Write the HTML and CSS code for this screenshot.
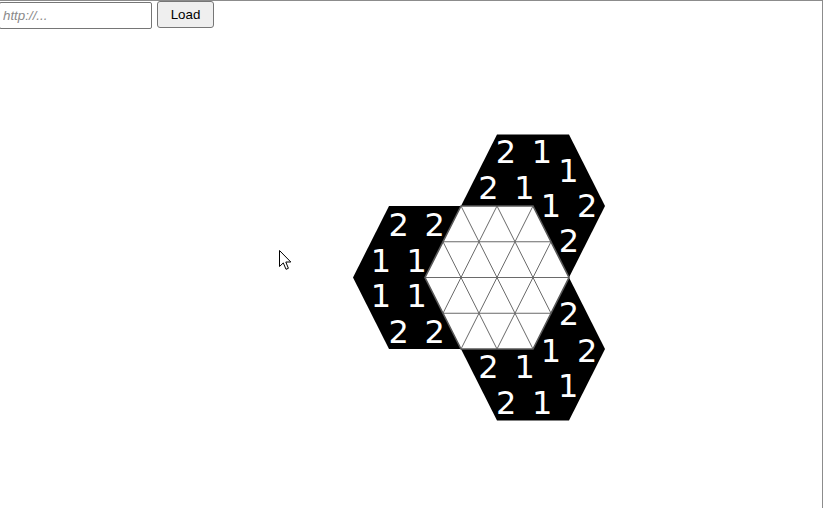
FILE: index.html
```html
<!DOCTYPE html>
<html>
<head>
<meta charset="utf-8">
<title>Puzzle</title>
<link rel="stylesheet" href="styles.css">
</head>
<body>
<div class="frame">
  <div class="bar">
    <input class="url" type="text" placeholder="http://...">
    <button class="load">Load</button>
  </div>
  <svg class="board" width="822" height="477" viewBox="0 30 822 477">
    <g class="blk">
      <polygon points="389,206 461,206 497,277.5 461,349 389,349 353,277.5"/>
      <polygon points="497,134.5 569,134.5 605,206 569,277.5 497,277.5 461,206"/>
      <polygon points="497,277.5 569,277.5 605,349 569,420.5 497,420.5 461,349"/>
    </g>
    <polygon class="grid-bg" points="461,206 533,206 569,277.5 533,349 461,349 425,277.5"/>
    <g class="grid">
      <line x1="443" y1="241.75" x2="551" y2="241.75"/>
      <line x1="425" y1="277.5" x2="569" y2="277.5"/>
      <line x1="443" y1="313.25" x2="551" y2="313.25"/>
      <line x1="443" y1="313.25" x2="497" y2="206"/>
      <line x1="461" y1="349" x2="533" y2="206"/>
      <line x1="497" y1="349" x2="551" y2="241.75"/>
      <line x1="443" y1="241.75" x2="497" y2="349"/>
      <line x1="461" y1="206" x2="533" y2="349"/>
      <line x1="497" y1="206" x2="551" y2="313.25"/>
    </g>
    <polygon class="grid-edge" points="461,206 533,206 569,277.5 533,349 461,349 425,277.5"/>
    <g class="num">
      <text x="506" y="163.4">2</text>
      <text x="542" y="163.4">1</text>
      <text x="568.5" y="181.7">1</text>
      <text x="488.5" y="199.2">2</text>
      <text x="524.5" y="199.2">1</text>
      <text x="551" y="216.7">1</text>
      <text x="587.2" y="216.7">2</text>
      <text x="569" y="251.7">2</text>

      <text x="398.8" y="235.5">2</text>
      <text x="434.8" y="235.5">2</text>
      <text x="381" y="271.7">1</text>
      <text x="416.7" y="271.7">1</text>
      <text x="381" y="306.7">1</text>
      <text x="416.7" y="306.7">1</text>
      <text x="398.8" y="342.7">2</text>
      <text x="434.8" y="342.7">2</text>

      <text x="569" y="325">2</text>
      <text x="551" y="361.5">1</text>
      <text x="587.2" y="361.5">2</text>
      <text x="488.5" y="378.4">2</text>
      <text x="524.7" y="378.4">1</text>
      <text x="568.3" y="396.5">1</text>
      <text x="506.2" y="413.7">2</text>
      <text x="542.3" y="413.7">1</text>
    </g>
  </svg>
</div>
<svg class="cursor" width="14" height="22" viewBox="0 0 14 22">
  <path d="M0.5,0.5 L0.5,16.5 L4.3,12.9 L7,19.3 L9.4,18.3 L6.8,12 L11.8,12 Z" fill="#fff" stroke="#000" stroke-width="1" stroke-linejoin="miter"/>
</svg>
</body>
</html>
```

FILE: styles.css
```css
html, body {
  margin: 0;
  padding: 0;
  background: #fff;
  overflow: hidden;
}

.frame {
  width: 822px;
  height: 507px;
  border-top: 1px solid #8c8c8c;
  border-right: 1px solid #8c8c8c;
  background: #fff;
}

.bar {
  display: flex;
  align-items: flex-start;
  gap: 5px;
  height: 29px;
}

.url {
  box-sizing: border-box;
  width: 153px;
  height: 27px;
  margin: 1px 0 0 -1px;
  padding: 0 3px;
  border: 1px solid #767676;
  border-radius: 2px;
  font-family: "Liberation Sans", Arial, sans-serif;
  font-size: 13.33px;
  color: #000;
  background: #fff;
  outline: none;
}

.url::placeholder {
  color: #8a8a8a;
  font-style: italic;
}

.load {
  box-sizing: border-box;
  width: 57px;
  height: 27px;
  margin: 0;
  padding: 0;
  border: 1px solid #767676;
  border-radius: 3px;
  background: #efefef;
  font-family: "Liberation Sans", Arial, sans-serif;
  font-size: 13.33px;
  color: #000;
}

.board {
  display: block;
}

.blk polygon {
  fill: #000;
}

.grid-bg {
  fill: #fff;
}

.grid line {
  stroke: #6a6a6a;
  stroke-width: 1;
}

.grid-edge {
  fill: none;
  stroke: #5a5a5a;
  stroke-width: 1.6;
}

.num text {
  fill: #fff;
  font-family: "DejaVu Sans", sans-serif;
  font-size: 32px;
  text-anchor: middle;
}

.cursor {
  position: absolute;
  left: 279px;
  top: 250px;
}
```
